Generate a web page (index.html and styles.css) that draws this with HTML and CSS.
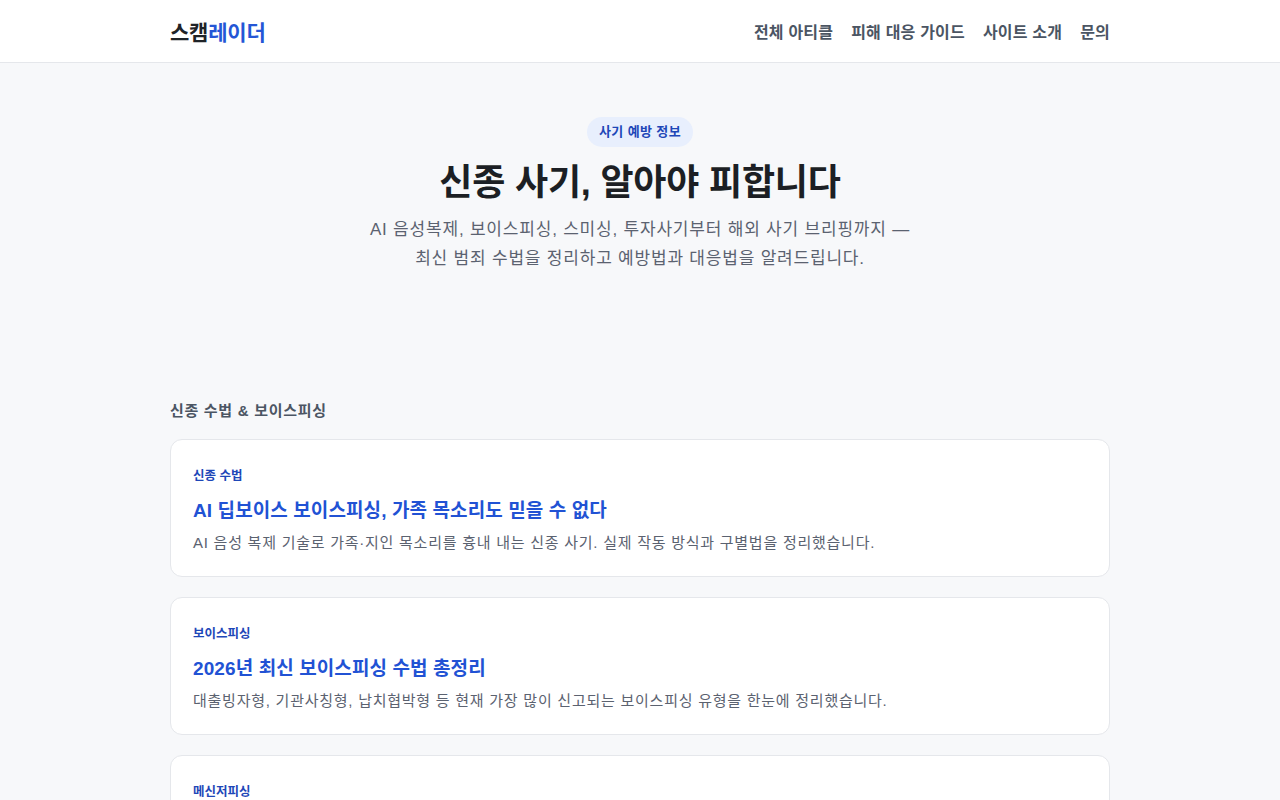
FILE: index.html
```html
<!DOCTYPE html>
<html lang="ko">
<head>
    <meta charset="utf-8">
    <title>스캠레이더 - 신종 사기, 알아야 피합니다</title>
    <link rel="stylesheet" href="styles.css">
</head>
<body>
    <header class="site-header">
        <div class="container header-inner">
            <a class="logo" href="#">스캠<span class="logo-accent">레이더</span></a>
            <nav class="nav">
                <a href="#">전체 아티클</a>
                <a href="#">피해 대응 가이드</a>
                <a href="#">사이트 소개</a>
                <a href="#">문의</a>
            </nav>
        </div>
    </header>

    <section class="hero">
        <span class="badge">사기 예방 정보</span>
        <h1 class="hero-title">신종 사기, 알아야 피합니다</h1>
        <p class="hero-desc">AI 음성복제, 보이스피싱, 스미싱, 투자사기부터 해외 사기 브리핑까지 —<br>최신 범죄 수법을 정리하고 예방법과 대응법을 알려드립니다.</p>
    </section>

    <main class="container">
        <h2 class="section-title">신종 수법 &amp; 보이스피싱</h2>
        <div class="card-list">
            <a class="card" href="#">
                <div class="card-cat">신종 수법</div>
                <h3 class="card-title">AI 딥보이스 보이스피싱, 가족 목소리도 믿을 수 없다</h3>
                <p class="card-desc">AI 음성 복제 기술로 가족·지인 목소리를 흉내 내는 신종 사기. 실제 작동 방식과 구별법을 정리했습니다.</p>
            </a>
            <a class="card" href="#">
                <div class="card-cat">보이스피싱</div>
                <h3 class="card-title">2026년 최신 보이스피싱 수법 총정리</h3>
                <p class="card-desc">대출빙자형, 기관사칭형, 납치협박형 등 현재 가장 많이 신고되는 보이스피싱 유형을 한눈에 정리했습니다.</p>
            </a>
            <a class="card" href="#">
                <div class="card-cat">메신저피싱</div>
                <h3 class="card-title">"엄마 나 폰 고장났어" 메신저피싱, 이렇게 대처하세요</h3>
                <p class="card-desc">가족을 사칭해 메신저로 돈을 요구하는 수법과 확인 절차, 피해 발생 시 대응 방법을 알려드립니다.</p>
            </a>
        </div>
    </main>
</body>
</html>
```

FILE: styles.css
```css
*{margin: 0;padding: 0;box-sizing: border-box;}
body{font-family: "Liberation Sans", "Noto Sans CJK KR", sans-serif;background: #f7f8fa;color: #1f2328;}
a{text-decoration: none;color: inherit;}
.container{width: 940px;margin: 0 auto;}

/* header */
.site-header{background: #fff;border-bottom: 1px solid #e5e7eb;height: 63px;}
.header-inner{height: 62px;display: flex;align-items: center;justify-content: space-between;}
.logo{font-size: 21px;font-weight: 700;color: #1f2328;letter-spacing: -0.2px;}
.logo-accent{color: #2456d6;}
.nav{display: flex;gap: 18px;}
.nav a{font-size: 16px;font-weight: 700;color: #4b5563;letter-spacing: 0.2px;}

/* hero */
.hero{text-align: center;padding: 54px 0 0;height: 338px;}
.badge{display: inline-block;height: 30px;line-height: 30px;padding: 0 12px;border-radius: 15px;background: #e8effd;color: #1e47b8;font-size: 13px;font-weight: 700;letter-spacing: 0.4px;}
.hero-title{font-size: 36px;font-weight: 700;line-height: 47px;margin-top: 12px;color: #1c1f24;letter-spacing: -0.2px;}
.hero-desc{font-size: 17px;line-height: 29px;color: #5b6270;margin-top: 9px;letter-spacing: 0.8px;}

/* article list */
.section-title{font-size: 15px;font-weight: 700;color: #4b5563;line-height: 20px;margin-bottom: 18px;letter-spacing: 0.7px;}
.card-list{display: flex;flex-direction: column;gap: 20px;padding-bottom: 40px;}
.card{display: block;background: #fff;border: 1px solid #e5e7eb;border-radius: 12px;padding: 26px 22px 21px;}
.card-cat{font-size: 12.5px;font-weight: 700;color: #1e47b8;line-height: 20px;}
.card-title{font-size: 19px;font-weight: 700;color: #2152d4;line-height: 28px;margin-top: 11px;letter-spacing: 0.1px;}
.card-desc{font-size: 15px;color: #5b6270;line-height: 24px;margin-top: 6px;letter-spacing: 0.75px;}
```
